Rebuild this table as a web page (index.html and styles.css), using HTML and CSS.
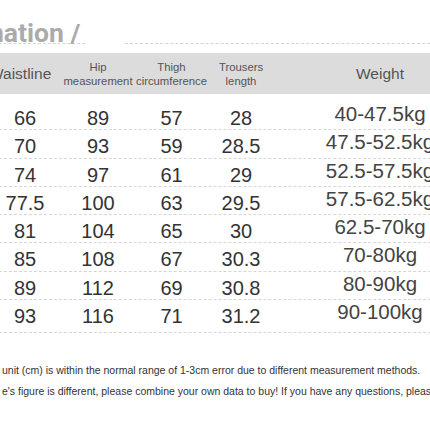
FILE: index.html
```html
<!DOCTYPE html>
<html lang="en">
<head>
  <meta charset="UTF-8" />
  <title>Size information</title>
  <link rel="stylesheet" href="styles.css">
</head>
<body>
  <div class="page">
    <div class="title-bar">
      <span class="title">nation /</span>
      <span class="title-gap"></span>
      <span class="title-rule"></span>
    </div>

    <div class="size-table">
      <div class="size-head">
        <div class="th big waist">Waistline</div>
        <div class="th">Hip<br>measurement</div>
        <div class="th">Thigh<br>circumference</div>
        <div class="th">Trousers<br>length</div>
        <div class="th big">Weight</div>
      </div>
      <div class="size-body" id="sizeBody"></div>
    </div>

    <div class="notes">
      <p>unit (cm) is within the normal range of 1-3cm error due to different measurement methods.</p>
      <p>e's figure is different, please combine your own data to buy! If you have any questions, please contact us.</p>
    </div>
  </div>

  <script>
    const sizes = [
      ["66", "89", "57", "28", "40-47.5kg"],
      ["70", "93", "59", "28.5", "47.5-52.5kg"],
      ["74", "97", "61", "29", "52.5-57.5kg"],
      ["77.5", "100", "63", "29.5", "57.5-62.5kg"],
      ["81", "104", "65", "30", "62.5-70kg"],
      ["85", "108", "67", "30.3", "70-80kg"],
      ["89", "112", "69", "30.8", "80-90kg"],
      ["93", "116", "71", "31.2", "90-100kg"]
    ];

    const body = document.getElementById("sizeBody");
    sizes.forEach(r => {
      body.innerHTML += `
        <div class="size-row">
          <div class="td">${r[0]}</div>
          <div class="td">${r[1]}</div>
          <div class="td">${r[2]}</div>
          <div class="td">${r[3]}</div>
          <div class="td weight">${r[4]}</div>
        </div>`;
    });
  </script>
</body>
</html>
```

FILE: styles.css
```css
body {
  margin: 0;
  padding: 0;
  background-color: #fff;
  font-family: "Liberation Sans", Arial, sans-serif;
  overflow: hidden;
}

.page {
  width: 430px;
  height: 430px;
  overflow: hidden;
  padding-top: 24px;
  box-sizing: border-box;
}

.title-bar {
  display: flex;
  align-items: flex-end;
  height: 20px;
}

.title {
  font-family: Roboto, "Liberation Sans", sans-serif;
  font-weight: bold;
  font-size: 26.5px;
  line-height: 20px;
  color: #ababab;
  margin-left: -11px;
  padding-right: 5px;
  white-space: nowrap;
  border-bottom: 1px dashed #d4d4d4;
}

.title-gap {
  width: 40px;
}

.title-rule {
  flex: 1;
  border-bottom: 1px dashed #d4d4d4;
}

.size-table {
  margin-left: -11px;
  width: 497px;
  margin-top: 9px;
}

.size-head,
.size-row {
  display: grid;
  grid-template-columns: 72px 74px 73px 66px 212px;
}

.size-head {
  background-color: #dcdcdc;
  height: 41px;
  align-items: center;
  margin-bottom: 8px;
}

.th {
  text-align: center;
  font-size: 11.3px;
  line-height: 14px;
  color: #555;
}

.th.big {
  font-size: 15.5px;
  line-height: 18px;
}

.th.waist {
  padding-right: 12px;
}

.size-row {
  height: 28.3px;
  border-bottom: 1px dashed #d6d6d6;
  box-sizing: border-box;
}

.size-row:last-child {
  height: 33px;
}

.td {
  text-align: center;
  font-size: 20px;
  line-height: 22px;
  padding-top: 5px;
  color: #333;
}

.td.weight {
  padding-top: 1px;
  font-size: 20.5px;
  color: #444;
  white-space: nowrap;
}

.notes {
  margin-top: 27px;
  padding-left: 2px;
}

.notes p {
  margin: 0;
  font-size: 10.5px;
  line-height: 21px;
  color: #333;
  white-space: nowrap;
}
```
